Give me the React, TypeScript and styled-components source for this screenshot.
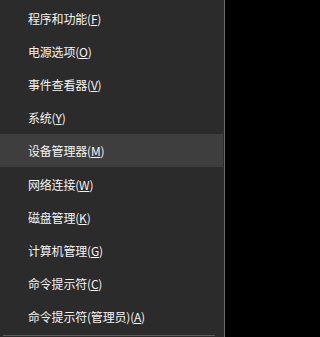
import styled, { createGlobalStyle } from 'styled-components'

const GlobalStyle = createGlobalStyle`
  html, body {
    margin: 0;
    padding: 0;
    background: #000;
  }
`

const Menu = styled.div`
  width: 225px;
  height: 337px;
  box-sizing: border-box;
  padding-top: 1.5px;
  background: #2b2b2b;
  border-right: 1px solid #6a6a6a;
  display: flex;
  flex-direction: column;
  overflow: hidden;
  font-family: "Noto Sans CJK SC", "Microsoft YaHei", sans-serif;
  font-size: 12px;
  color: #f4f4f4;
`

const Item = styled.div<{ $active?: boolean }>`
  height: 33.2px;
  flex: none;
  display: flex;
  align-items: center;
  padding-left: 28px;
  margin-right: 1px;
  background: ${p => (p.$active ? '#3e3e3e' : 'transparent')};
  letter-spacing: -0.2px;
  white-space: nowrap;
`

const Key = styled.span`
  text-decoration: underline;
  text-underline-offset: 1px;
`

const Separator = styled.div`
  flex: none;
  height: 1px;
  margin: 2px 0 0 3px;
  width: 212px;
  background: #5c5c5c;
`

const items: { label: string; key: string; active?: boolean }[] = [
  { label: '程序和功能', key: 'F' },
  { label: '电源选项', key: 'O' },
  { label: '事件查看器', key: 'V' },
  { label: '系统', key: 'Y' },
  { label: '设备管理器', key: 'M', active: true },
  { label: '网络连接', key: 'W' },
  { label: '磁盘管理', key: 'K' },
  { label: '计算机管理', key: 'G' },
  { label: '命令提示符', key: 'C' },
  { label: '命令提示符(管理员)', key: 'A' },
]

export default function App() {
  return (
    <>
      <GlobalStyle />
      <Menu>
        {items.map(it => (
          <Item key={it.key} $active={it.active}>
            {it.label}(<Key>{it.key}</Key>)
          </Item>
        ))}
        <Separator />
      </Menu>
    </>
  )
}
